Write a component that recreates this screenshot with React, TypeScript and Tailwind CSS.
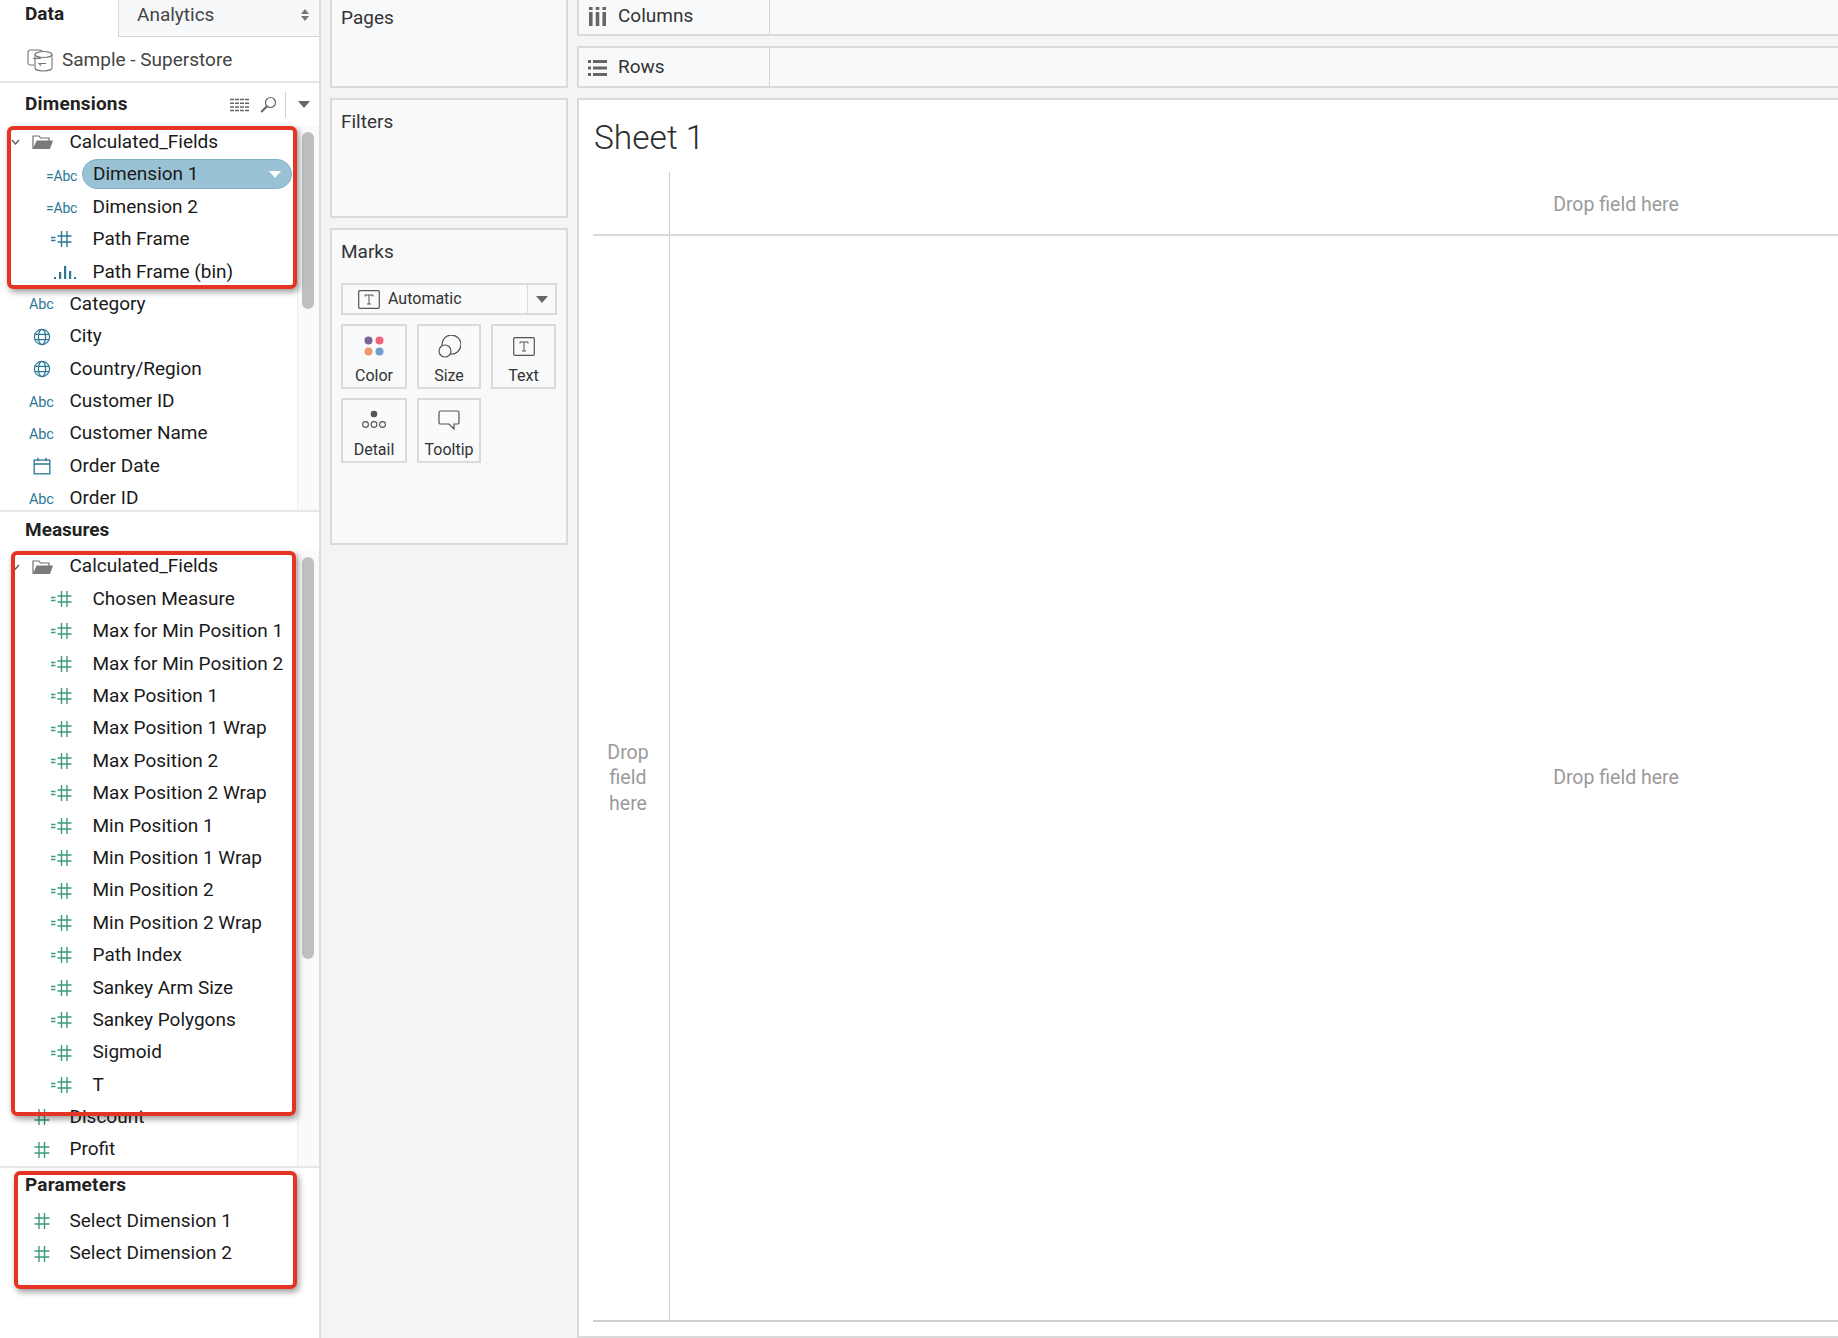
import type { ReactNode } from 'react'

const BLUE = '#2d7796'
const GREEN = '#3c9a7d'

function Hash({ eq, color = GREEN }: { eq?: boolean; color?: string }) {
  return (
    <svg width="22" height="18" viewBox="0 0 22 18" fill="none" stroke={color} strokeWidth="1.4" className="shrink-0">
      {eq && <path d="M0 7.5h4.5M0 10.5h4.5" strokeWidth="1.5" />}
      <path d="M10.5 1v16M16 1v16M6.5 6h14M6.5 12h14" />
    </svg>
  )
}

function Hash2() {
  return (
    <svg width="16" height="18" viewBox="0 0 16 18" fill="none" stroke={GREEN} strokeWidth="1.4" className="shrink-0">
      <path d="M5 1v16M10.5 1v16M0.5 6h15M0.5 12h15" />
    </svg>
  )
}

function Bins() {
  return (
    <svg width="22" height="18" viewBox="0 0 22 18" fill={BLUE} className="shrink-0">
      <rect x="0" y="14" width="2" height="2" />
      <rect x="5" y="9" width="2.2" height="7" />
      <rect x="10" y="3" width="2.2" height="13" />
      <rect x="15" y="8" width="2.2" height="8" />
      <rect x="20" y="14" width="2" height="2" />
    </svg>
  )
}

function Globe() {
  return (
    <svg width="18" height="18" viewBox="0 0 18 18" fill="none" stroke={BLUE} strokeWidth="1.2" className="shrink-0">
      <circle cx="9" cy="9" r="7.6" />
      <ellipse cx="9" cy="9" rx="3.6" ry="7.6" />
      <path d="M1.8 6.4h14.4M1.8 11.6h14.4" />
    </svg>
  )
}

function Calendar() {
  return (
    <svg width="18" height="18" viewBox="0 0 18 18" fill="none" stroke={BLUE} strokeWidth="1.3" className="shrink-0">
      <rect x="1.2" y="3" width="15.6" height="13.8" />
      <path d="M1.2 7h15.6M5 0.8v3.4M13 0.8v3.4" />
    </svg>
  )
}

function Folder() {
  return (
    <svg width="22" height="16" viewBox="0 0 22 16" className="shrink-0">
      <path d="M1 15V2h6l1.5 2H17v3" fill="none" stroke="#6e6e6e" strokeWidth="1.2" />
      <path d="M1 15L4.5 6.5H21L18 15Z" fill="#7a7a7a" />
    </svg>
  )
}

function Chevron() {
  return (
    <svg width="9" height="6" viewBox="0 0 9 6" fill="none" stroke="#555" strokeWidth="1.2">
      <path d="M1 1l3.5 4L8 1" />
    </svg>
  )
}

function AbcIcon({ eq }: { eq?: boolean }) {
  return (
    <span className={`leading-none tracking-[-0.2px] text-[#2d7796] mt-[3px] ${eq ? 'text-[14px] -ml-px' : 'text-[14.5px] -ml-[1px]'}`}>
      {eq ? '=Abc' : 'Abc'}
    </span>
  )
}

function Caret({ color = '#666', className = '' }: { color?: string; className?: string }) {
  return (
    <svg width="12" height="7" viewBox="0 0 12 7" className={className}>
      <path d="M0 0h12L6 7Z" fill={color} />
    </svg>
  )
}

function Row({ child, icon, label, iconClass = '' }: { child?: boolean; icon: ReactNode; label: string; iconClass?: string }) {
  return (
    <div className="flex items-center h-[32.4px] whitespace-nowrap">
      <span className={`flex items-center shrink-0 ${child ? 'w-[92.5px] pl-[47px]' : 'w-[69.5px] pl-[30px]'} ${iconClass}`}>{icon}</span>
      <span>{label}</span>
    </div>
  )
}

function FolderRow() {
  return (
    <div className="flex items-center h-[32.4px] whitespace-nowrap">
      <span className="w-[11px] shrink-0" />
      <span className="w-[21px] shrink-0 flex"><Chevron /></span>
      <span className="w-[37.5px] shrink-0 flex"><Folder /></span>
      <span>Calculated_Fields</span>
    </div>
  )
}

function ScrollTrack({ thumbH }: { thumbH: number }) {
  return (
    <div className="w-[22px] shrink-0 border-l border-[#eeeeee] bg-[#fafafa] pl-[4px] pt-[6px]">
      <div className="w-[12px] rounded-[6px] bg-[#bdbfc1]" style={{ height: thumbH }} />
    </div>
  )
}

const measures = [
  'Chosen Measure',
  'Max for Min Position 1',
  'Max for Min Position 2',
  'Max Position 1',
  'Max Position 1 Wrap',
  'Max Position 2',
  'Max Position 2 Wrap',
  'Min Position 1',
  'Min Position 1 Wrap',
  'Min Position 2',
  'Min Position 2 Wrap',
  'Path Index',
  'Sankey Arm Size',
  'Sankey Polygons',
  'Sigmoid',
  'T',
]

function Sidebar() {
  return (
    <aside className="w-[321px] shrink-0 flex flex-col bg-white border-r-[2px] border-[#dcdddf] text-[19px] text-[#1a1a1a]">
      <div className="flex h-[37px] shrink-0">
        <div className="w-[118px] pl-[25px] font-bold text-[#222] leading-[27px]">Data</div>
        <div className="flex-1 flex items-center justify-between pl-[18px] pr-[9px] bg-[#f7f8f9] border-l border-b border-[#d4d5d7] pb-[6px] text-[#444]">
          <span>Analytics</span>
          <svg width="10" height="12" viewBox="0 0 10 12" fill="#777">
            <path d="M5 0l4 5H1ZM5 12L1 7h8Z" />
          </svg>
        </div>
      </div>
      <div className="flex items-center h-[46px] shrink-0 pl-[27px] pt-[2px] gap-[9px] border-b-[2px] border-[#e4e5e7] text-[#444]">
        <svg width="26" height="24" viewBox="0 0 26 24" fill="none" stroke="#777" strokeWidth="1.1">
          <path d="M7 17H3.500A2.500 2.500 0 0 1 1 14.500V4.500A2.500 2.500 0 0 1 3.500 2H13A2.500 2.500 0 0 1 15.500 4" />
          <ellipse cx="16.500" cy="6.500" rx="8.500" ry="3" />
          <path d="M8 6.500V20c0 1.700 3.800 3 8.500 3s8.500-1.300 8.500-3V6.500" />
          <path d="M6 10.500h7l-2-2M19 15.500h-7l2 2" />
        </svg>
        <span>Sample - Superstore</span>
      </div>

      <div className="flex items-center h-[43px] shrink-0 pl-[25px] pr-[9px]">
        <span className="font-bold text-[#222] flex-1 tracking-[0.2px]">Dimensions</span>
        <svg width="19" height="14" viewBox="0 0 19 14" fill="none" stroke="#666" strokeWidth="1.5" strokeDasharray="4 1">
          <path d="M0 1.500h19M0 5.200h19M0 8.900h19M0 12.600h19" />
        </svg>
        <svg width="17" height="17" viewBox="0 0 17 17" fill="none" stroke="#666" strokeWidth="1.2" className="ml-[11px]">
          <circle cx="10.500" cy="6.500" r="5" />
          <path d="M7 10.200L1.200 16" strokeWidth="2" />
        </svg>
        <span className="w-px h-[26px] bg-[#d0d0d0] ml-[8px] mr-[12px]" />
        <Caret />
      </div>
      <div className="flex h-[386px] shrink-0 overflow-hidden border-b-[2px] border-[#e6e7e9]">
        <div className="w-[297px] shrink-0">
          <FolderRow />
          <Row child icon={<AbcIcon eq />} label="" />
          <Row child icon={<AbcIcon eq />} label="Dimension 2" />
          <Row child iconClass="pl-[51px]" icon={<Hash eq color={BLUE} />} label="Path Frame" />
          <Row child iconClass="pl-[54px]" icon={<Bins />} label="Path Frame (bin)" />
          <Row icon={<AbcIcon />} label="Category" />
          <Row iconClass="pl-[33px]" icon={<Globe />} label="City" />
          <Row iconClass="pl-[33px]" icon={<Globe />} label="Country/Region" />
          <Row icon={<AbcIcon />} label="Customer ID" />
          <Row icon={<AbcIcon />} label="Customer Name" />
          <Row iconClass="pl-[33px]" icon={<Calendar />} label="Order Date" />
          <Row icon={<AbcIcon />} label="Order ID" />
        </div>
        <ScrollTrack thumbH={177} />
      </div>

      <div className="flex items-center h-[38.5px] pb-[1.5px] shrink-0 pl-[25px] font-bold text-[#222]">Measures</div>
      <div className="flex h-[617px] shrink-0 overflow-hidden border-b-[2px] border-[#e6e7e9]">
        <div className="w-[297px] shrink-0">
          <FolderRow />
          {measures.map((m) => (
            <Row key={m} child iconClass="pl-[51px]" icon={<Hash eq />} label={m} />
          ))}
          <Row iconClass="pl-[34px]" icon={<Hash2 />} label="Discount" />
          <Row iconClass="pl-[34px]" icon={<Hash2 />} label="Profit" />
        </div>
        <ScrollTrack thumbH={402} />
      </div>

      <div className="flex items-center h-[37.5px] pb-[1.5px] shrink-0 pl-[25px] font-bold text-[#222] tracking-[0.2px]">Parameters</div>
      <Row iconClass="pl-[34px]" icon={<Hash2 />} label="Select Dimension 1" />
      <Row iconClass="pl-[34px]" icon={<Hash2 />} label="Select Dimension 2" />
    </aside>
  )
}

function Tile({ icon, label }: { icon: ReactNode; label: string }) {
  return (
    <div className="h-[65px] border-[2px] border-[#d9dadc] bg-[#f9fafb] flex flex-col items-center pt-[7px] text-[16px] text-[#333]">
      <span className="h-[26px] flex items-center">{icon}</span>
      <span className="mt-[8px] leading-[18px]">{label}</span>
    </div>
  )
}

function TBox() {
  return (
    <svg width="22" height="19" viewBox="0 0 22 19" fill="none" stroke="#555" className="shrink-0">
      <rect x="0.7" y="0.7" width="20.6" height="17.6" rx="1" strokeWidth="1.2" />
      <path d="M7 6.500V5h8v1.500M11 5v9M9 14h4" strokeWidth="1" />
    </svg>
  )
}

function Card({ title, className, children }: { title: string; className: string; children?: ReactNode }) {
  return (
    <section className={`border-[2px] border-[#d9dadc] bg-[#f8f9fb] px-[9px] text-[19px] text-[#333] ${className}`}>
      <h2 className="font-normal leading-[24px]">{title}</h2>
      {children}
    </section>
  )
}

function MiddleColumn() {
  return (
    <div className="w-[256px] shrink-0 px-[9px] flex flex-col gap-[10px]">
      <Card title="Pages" className="h-[88px] border-t-0 pt-[6px]" />
      <Card title="Filters" className="h-[120px] pt-[10px]" />
      <Card title="Marks" className="h-[317px] pt-[10px]">
        <div className="flex items-center h-[32px] mt-[19px] border-[2px] border-[#d9dadc] bg-[#f9fafb] text-[16px]">
          <span className="flex-1 flex items-center gap-[8px] pl-[15px]">
            <TBox />
            Automatic
          </span>
          <span className="w-[28px] h-full flex items-center justify-center border-l border-[#d9dadc]">
            <Caret />
          </span>
        </div>
        <div className="grid grid-cols-[66px_64px_65px] gap-x-[10px] gap-y-[9px] mt-[9px]">
          <Tile
            label="Color"
            icon={
              <svg width="20" height="20" viewBox="0 0 20 20">
                <circle cx="4.500" cy="4.500" r="4" fill="#7b6594" />
                <circle cx="15.500" cy="4.500" r="4" fill="#ef647c" />
                <circle cx="4.500" cy="15.500" r="4" fill="#eb9a6c" />
                <circle cx="15.500" cy="15.500" r="4" fill="#6f9fca" />
              </svg>
            }
          />
          <Tile
            label="Size"
            icon={
              <svg width="23" height="23" viewBox="0 0 23 23" fill="none" stroke="#555" strokeWidth="1.2">
                <path d="M4 10.500A9.500 9.500 0 1 1 12.500 19" />
                <circle cx="7" cy="16" r="6" />
              </svg>
            }
          />
          <Tile label="Text" icon={<TBox />} />
          <Tile
            label="Detail"
            icon={
              <svg width="24" height="20" viewBox="0 0 24 20" fill="none" stroke="#555" strokeWidth="1.1">
                <circle cx="12" cy="4" r="3.300" fill="#555" stroke="none" />
                <circle cx="3.500" cy="14.500" r="2.900" />
                <circle cx="12" cy="14.500" r="2.900" />
                <circle cx="20.500" cy="14.500" r="2.900" />
              </svg>
            }
          />
          <Tile
            label="Tooltip"
            icon={
              <svg width="22" height="21" viewBox="0 0 22 21" fill="none" stroke="#555" strokeWidth="1.2">
                <path d="M2.500 1h17a1.500 1.500 0 0 1 1.500 1.500v10a1.500 1.500 0 0 1-1.500 1.500H16v5l-5-5H2.500A1.500 1.500 0 0 1 1 13V2.500A1.500 1.500 0 0 1 2.500 1Z" />
              </svg>
            }
          />
        </div>
      </Card>
    </div>
  )
}

function Shelf({ icon, label, className }: { icon: ReactNode; label: string; className: string }) {
  return (
    <div className={`flex border-[2px] border-r-0 border-[#d9dadc] bg-[#f8f9fb] text-[19px] text-[#333] ${className}`}>
      <div className="w-[191px] shrink-0 flex items-center gap-[11px] pl-[9px] border-r border-[#d0d1d3]">
        <span className="w-[19px] flex justify-center">{icon}</span>
        <span>{label}</span>
      </div>
    </div>
  )
}

function Workspace() {
  return (
    <div className="flex-1 min-w-0 flex flex-col gap-[10px] overflow-hidden">
      <Shelf
        label="Columns"
        className="h-[36px] border-t-0 [&>div]:pb-[2px]"
        icon={
          <svg width="17" height="19" viewBox="0 0 17 19" fill="#666">
            <rect x="0" y="0" width="3.600" height="3" />
            <rect x="0" y="5" width="3.600" height="14" />
            <rect x="6.700" y="0" width="3.600" height="3" />
            <rect x="6.700" y="5" width="3.600" height="14" />
            <rect x="13.400" y="0" width="3.600" height="3" />
            <rect x="13.400" y="5" width="3.600" height="14" />
          </svg>
        }
      />
      <Shelf
        label="Rows"
        className="h-[42px] [&>div]:pt-[1px]"
        icon={
          <svg width="19" height="16" viewBox="0 0 19 16" fill="#666">
            <rect x="0" y="0" width="3" height="3" />
            <rect x="5" y="0" width="14" height="3" />
            <rect x="0" y="6.500" width="3" height="3" />
            <rect x="5" y="6.500" width="14" height="3" />
            <rect x="0" y="13" width="3" height="3" />
            <rect x="5" y="13" width="14" height="3" />
          </svg>
        }
      />
      <main className="flex-1 min-h-0 flex flex-col bg-white border-l-[2px] border-t-[2px] border-b-[2px] border-[#d9dadc] pl-[14px] text-[#9a9a9a] text-[19.5px] overflow-hidden">
        <h1 className="h-[72px] shrink-0 pl-[1px] pt-[16px] text-[33.5px] leading-[44px] font-light text-[#2e2e2e]">Sheet 1</h1>
        <div className="flex h-[63.5px] shrink-0 border-b-[2px] border-[#d9dadc]">
          <div className="w-[77px] shrink-0 border-r border-[#cfcfcf]" />
          <div className="w-[1892px] shrink-0 text-center pt-[21px] leading-[24px]">Drop field here</div>
        </div>
        <div className="flex h-[1086.5px] shrink-0 border-b-[2px] border-[#cfcfcf]">
          <div className="w-[77px] shrink-0 border-r border-[#cfcfcf] flex items-center justify-center pr-[6px] text-center leading-[25.5px]">
            <span className="w-[50px]">Drop field here</span>
          </div>
          <div className="w-[1892px] shrink-0 flex items-center justify-center">Drop field here</div>
        </div>
      </main>
    </div>
  )
}

function Callout({ className }: { className: string }) {
  return <div className={`absolute rounded-[6px] border-[4px] border-[#e43423] shadow-[2px_3px_6px_rgba(0,0,0,0.4)] ${className}`} />
}

export default function App() {
  return (
    <div className="relative w-[1838px] h-[1338px] flex overflow-hidden bg-[#f3f4f6] font-['Roboto',sans-serif]">
      <Sidebar />
      <MiddleColumn />
      <Workspace />

      {/* selected pill sits over its row */}
      <div className="absolute left-[82px] top-[159px] w-[210px] h-[30px] rounded-full bg-[#99c3d5] border border-[#7fb2c8] flex items-center justify-between pl-[10px] pr-[10px] text-[19px] text-[#1a1a1a]">
        <span>Dimension 1</span>
        <Caret color="#ffffff" />
      </div>

      <Callout className="left-[7px] top-[126px] w-[290px] h-[163px]" />
      <Callout className="left-[11px] top-[551px] w-[285px] h-[565px]" />
      <Callout className="left-[14px] top-[1171px] w-[283px] h-[118px]" />
    </div>
  )
}
